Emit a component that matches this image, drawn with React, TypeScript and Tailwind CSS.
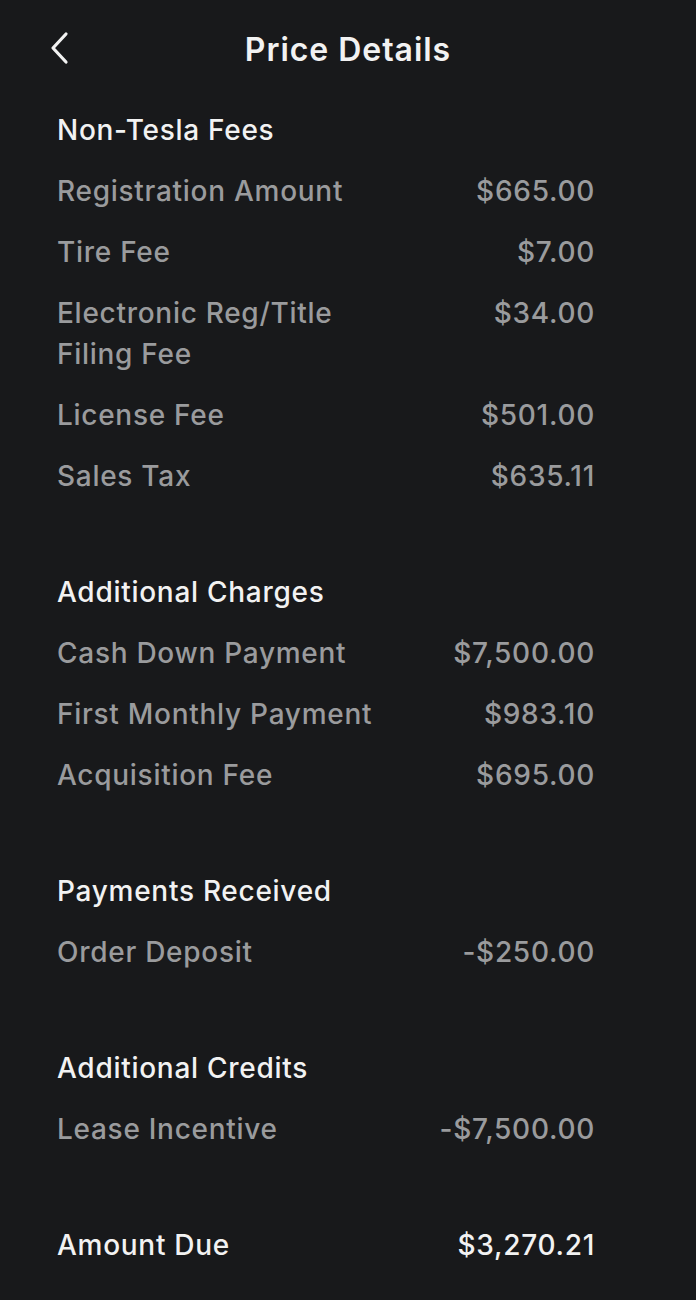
import React from 'react'

type Row = { label: string; value: string }
type Section = { title: string; rows: Row[] }

const sections: Section[] = [
  {
    title: 'Non-Tesla Fees',
    rows: [
      { label: 'Registration Amount', value: '$665.00' },
      { label: 'Tire Fee', value: '$7.00' },
      { label: 'Electronic Reg/Title Filing Fee', value: '$34.00' },
      { label: 'License Fee', value: '$501.00' },
      { label: 'Sales Tax', value: '$635.11' },
    ],
  },
  {
    title: 'Additional Charges',
    rows: [
      { label: 'Cash Down Payment', value: '$7,500.00' },
      { label: 'First Monthly Payment', value: '$983.10' },
      { label: 'Acquisition Fee', value: '$695.00' },
    ],
  },
  {
    title: 'Payments Received',
    rows: [{ label: 'Order Deposit', value: '-$250.00' }],
  },
  {
    title: 'Additional Credits',
    rows: [{ label: 'Lease Incentive', value: '-$7,500.00' }],
  },
]

function PriceRow({ label, value }: Row) {
  return (
    <div className="flex items-start justify-between py-[10px] text-[28px] leading-[41px] text-[#9a9b9d]">
      <span className="max-w-[345px]">{label}</span>
      <span>{value}</span>
    </div>
  )
}

export default function App() {
  return (
    <div
      className="min-h-[1300px] w-full bg-[#18191b] font-medium tracking-[0.045em] text-[#f2f2f2]"
      style={{ fontFamily: 'Inter, "Noto Sans", sans-serif' }}
    >
      {/* Header */}
      <div className="relative flex h-[100px] items-center justify-center">
        <button className="absolute left-[46px] top-[30px] text-[#f2f2f2]">
          <svg width="28" height="36" viewBox="0 0 28 36" fill="none">
            <path d="M20 4 L7 18 L20 32" stroke="currentColor" strokeWidth="3.2" strokeLinecap="round" strokeLinejoin="round" />
          </svg>
        </button>
        <h1 className="text-[32px] font-semibold tracking-[0.03em]">Price Details</h1>
      </div>

      <div className="flex flex-col gap-[55px] pl-[57px] pr-[101px]">
        {sections.map((s) => (
          <div key={s.title}>
            <div className="py-[10px] text-[28px] leading-[41px]">{s.title}</div>
            {s.rows.map((r) => (
              <PriceRow key={r.label} {...r} />
            ))}
          </div>
        ))}
        <div className="flex justify-between py-[10px] text-[28px] leading-[41px]">
          <span>Amount Due</span>
          <span>$3,270.21</span>
        </div>
      </div>
    </div>
  )
}
